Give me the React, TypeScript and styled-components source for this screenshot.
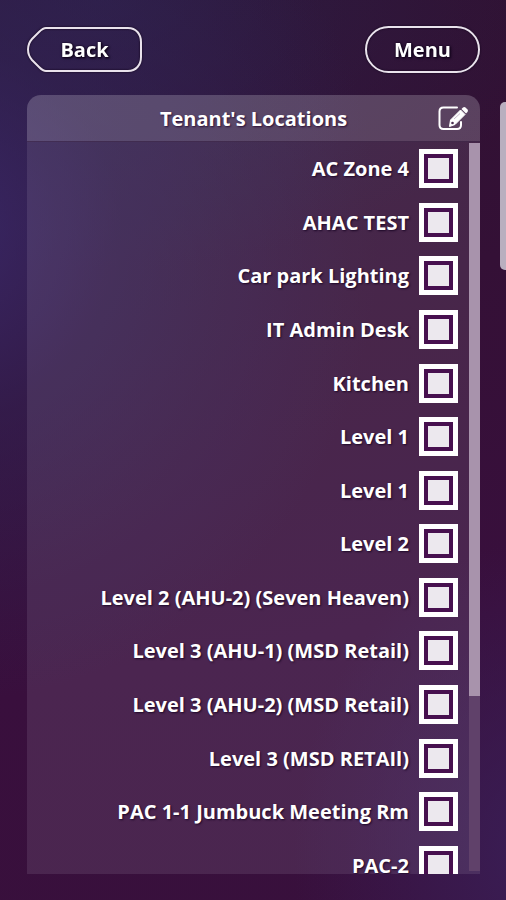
import React from "react";
import styled, { createGlobalStyle } from "styled-components";

const Global = createGlobalStyle`
  *, *::before, *::after { box-sizing: border-box; }
  html, body { margin: 0; background: #32133f; }
  body { font-family: "Open Sans", "Noto Sans", sans-serif; color: #fff; }
`;

const Page = styled.div`
  position: relative;
  display: flex;
  flex-direction: column;
  gap: 22px;
  height: 100vh;
  padding: 26px 26px 26px 27px;
  overflow: hidden;
  background:
    radial-gradient(ellipse 85% 52% at -10% 26%, rgba(58, 42, 108, 0.85) 0%, rgba(50, 38, 92, 0.5) 40%, rgba(48, 32, 80, 0) 100%),
    radial-gradient(ellipse 90% 30% at 20% 0%, rgba(44, 34, 76, 0.7) 0%, rgba(44, 34, 76, 0) 100%),
    radial-gradient(ellipse 50% 35% at 108% 95%, #3a1e56 0%, rgba(58, 30, 86, 0) 100%),
    linear-gradient(170deg, #2f1232 0%, #341036 35%, #390f3d 70%, #38103c 100%);
`;

const TopBar = styled.nav`
  display: flex;
  justify-content: space-between;
`;

const NavButton = styled.button<{ $pill?: boolean }>`
  position: relative;
  width: 115px;
  height: 47px;
  padding: 0;
  border: ${(p) => (p.$pill ? "2px solid #e9e2ec" : "0")};
  border-radius: 24px;
  background: transparent;
  color: #fff;
  font: 700 20px/27px "Open Sans", "Noto Sans", sans-serif;
  text-shadow: 1px 1px 2px #12041c;
  filter: drop-shadow(0 0 1px #12041c);
  cursor: pointer;
`;

const Outline = styled.svg`
  position: absolute;
  inset: 0;
  width: 100%;
  height: 100%;
`;

const Panel = styled.main`
  display: flex;
  flex-direction: column;
  flex: 1;
  min-height: 0;
  overflow: hidden;
  border-radius: 14px 14px 0 0;
  background: rgba(225, 220, 240, 0.11);
`;

const PanelHeader = styled.header`
  display: grid;
  grid-template-columns: 32px 1fr 32px;
  align-items: center;
  flex: none;
  height: 47px;
  padding: 0 11px;
  border-bottom: 1px solid rgba(40, 14, 50, 0.5);
  background: rgba(255, 255, 255, 0.12);
`;

const Title = styled.h1`
  grid-column: 2;
  margin: 0;
  text-align: center;
  font-size: 20px;
  line-height: 27px;
  font-weight: 700;
  text-shadow: 1px 1px 2px #2a1035;
`;

const EditButton = styled.button`
  display: flex;
  padding: 0;
  border: 0;
  background: transparent;
  cursor: pointer;
`;

const Body = styled.div`
  display: flex;
  flex: 1;
  min-height: 0;
`;

const List = styled.ul`
  display: grid;
  grid-auto-rows: 1fr;
  height: 750px;
  margin: 0;
  padding: 0;
  list-style: none;
`;

const Scroller = styled.div`
  flex: 1;
  overflow-y: auto;
  scrollbar-width: none;
`;

const Row = styled.label`
  display: flex;
  align-items: center;
  justify-content: flex-end;
  gap: 10px;
  height: 100%;
  padding-right: 11px;
  font-size: 20px;
  line-height: 27px;
  font-weight: 700;
  text-shadow: 1px 1px 2px #1d0828;
  cursor: pointer;
`;

const Check = styled.input`
  display: grid;
  place-items: center;
  width: 39px;
  height: 39px;
  margin: 0;
  appearance: none;
  border: 5px solid #fff;
  background: #47104f;

  &::before {
    content: "";
    width: 21px;
    height: 21px;
    background: #ece8ee;
  }
  &:checked::before { background: #47104f; }
`;

const Track = styled.div`
  flex: none;
  width: 11px;
  margin: 1px 0 3px;
  background: #60416a;
`;

const Thumb = styled.div`
  height: 76%;
  background: #a893ac;
`;

const PageThumb = styled.div`
  position: absolute;
  top: 102px;
  right: 0;
  width: 6px;
  height: 168px;
  border-radius: 5px 0 0 5px;
  background: #b9afbf;
`;

const locations = [
  "AC Zone 4",
  "AHAC TEST",
  "Car park Lighting",
  "IT Admin Desk",
  "Kitchen",
  "Level 1",
  "Level 1",
  "Level 2",
  "Level 2 (AHU-2) (Seven Heaven)",
  "Level 3 (AHU-1) (MSD Retail)",
  "Level 3 (AHU-2) (MSD Retail)",
  "Level 3 (MSD RETAIl)",
  "PAC 1-1 Jumbuck Meeting Rm",
  "PAC-2",
];

const EditIcon = () => (
  <svg width="32" height="28" viewBox="0 0 32 28" fill="none">
    <path d="M20 3.500H6.500Q2.500 3.500 2.500 7.500V21Q2.500 25 6.500 25H20Q24 25 24 21V18" stroke="#fff" strokeWidth="2" strokeLinecap="round" />
    <path d="M12.500 22.500L13.500 16L23.500 6L28 10.500L18 20.500Z" fill="#fff" stroke="#fff" strokeWidth="1" strokeLinejoin="round" />
    <path d="M24.500 5L26 3.500Q27.300 2.500 28.500 3.500L30.500 5.500Q31.500 6.700 30.500 8L29 9.500Z" fill="#fff" />
    <path d="M17 15L23 9.500" stroke="#c9bace" strokeWidth="1" />
    <circle cx="15.500" cy="19" r="1.300" fill="#4a2c50" />
  </svg>
);

export default function App() {
  return (
    <>
      <Global />
      <Page>
        <TopBar>
          <NavButton type="button">
            <Outline viewBox="0 0 115 47" fill="none" aria-hidden="true">
              <path
                d="M19 2H101C109 2 114 8 114 16V31C114 39 109 45 101 45H19C16 45 14 43 12 41L5 34C-0.300 28 -0.300 19 5 13L12 6C14 4 16 2 19 2Z"
                stroke="#e9e2ec"
                strokeWidth="2"
              />
            </Outline>
            Back
          </NavButton>
          <NavButton type="button" $pill>
            Menu
          </NavButton>
        </TopBar>
        <Panel>
          <PanelHeader>
            <Title>Tenant's Locations</Title>
            <EditButton type="button" aria-label="Edit locations">
              <EditIcon />
            </EditButton>
          </PanelHeader>
          <Body>
            <Scroller>
              <List>
                {locations.map((name, i) => (
                  <li key={i}>
                    <Row>
                      {name}
                      <Check type="checkbox" />
                    </Row>
                  </li>
                ))}
              </List>
            </Scroller>
            <Track>
              <Thumb />
            </Track>
          </Body>
        </Panel>
        <PageThumb />
      </Page>
    </>
  );
}
